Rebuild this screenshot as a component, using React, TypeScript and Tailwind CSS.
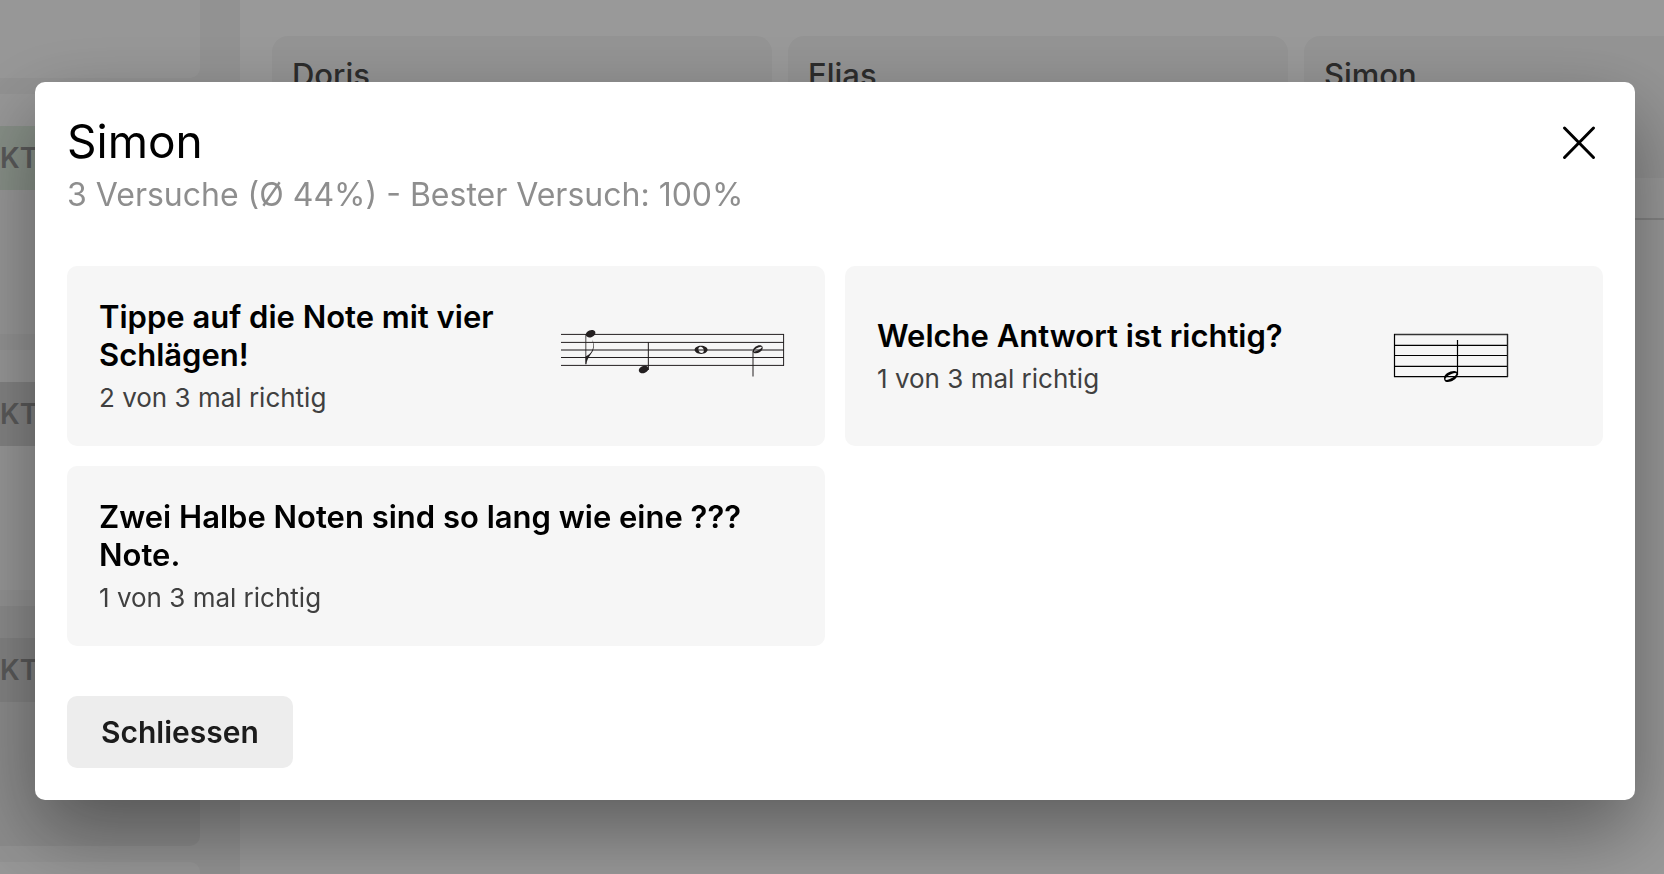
import React from "react";

type Tone = "done" | "idle";

const lessons: { tone: Tone; active: boolean }[] = [
  { tone: "done", active: false },
  { tone: "idle", active: false },
  { tone: "idle", active: true },
];

const students = ["Doris", "Elias", "Simon"];

function StaffFourNotes() {
  return (
    <svg viewBox="0 0 240 60" className="h-[60px] w-[240px] shrink-0" role="img" aria-label="Notenzeile mit vier Noten">
      <g stroke="#231f20" strokeWidth="1">
        <path d="M8 8.4H231M8 16.4H231M8 31.5H231M8 39.4H231" />
        <path d="M8 24H231" strokeWidth="1.4" opacity="0.7" />
        <path d="M230.6 8V39.8" />
        <path d="M32.8 8V38" strokeWidth="1.1" opacity="0.75" />
        <path d="M95.4 16V44" strokeWidth="1.2" opacity="0.85" />
        <path d="M200 25V50.5" strokeWidth="1.4" opacity="0.7" />
      </g>
      <g fill="#231f20">
        <ellipse cx="37.6" cy="7.7" rx="5" ry="3.5" transform="rotate(-22 37.6 7.7)" />
        <ellipse cx="90.6" cy="43.5" rx="5" ry="3.6" transform="rotate(-22 90.6 43.5)" />
        <path d="M32.6 38.5V30.5C36 29 40.2 25.5 40.2 19.5C40.2 17 39.8 15 39 13.2C40.9 16 41.4 20.5 40.2 24C38.9 28 34.6 30.5 33.2 38.5Z" />
        <path fillRule="evenodd" d="M148.1 19.7C151.7 19.7 154.6 21.5 154.6 23.8S151.7 27.9 148.1 27.9S141.6 26.1 141.6 23.8S144.5 19.7 148.1 19.7ZM147.3 20.7C145.5 21 145 22.6 145.6 24.4C146.2 26.2 147.6 27.1 149 26.9C150.7 26.6 151.2 25 150.6 23.2C150 21.4 148.7 20.5 147.3 20.7Z" />
        <path fillRule="evenodd" d="M199.8 24.9C200.5 21 205.5 18.3 208.5 19.7C210.7 20.8 209.8 24.2 206.9 26C203.9 27.9 199.5 27.5 199.8 24.9ZM201 25.3C202 26.3 208.5 23 208.8 21.3C208.4 19.5 200.8 23.3 201 25.3Z" />
      </g>
    </svg>
  );
}

function StaffHalfNote() {
  return (
    <svg viewBox="0 0 240 60" className="h-[60px] w-[240px] shrink-0" role="img" aria-label="Notenzeile mit einer halben Note">
      <g stroke="#000" strokeWidth="1.2" fill="none">
        <path d="M63 8.5H177" stroke="#333" strokeWidth="1.4" />
        <path d="M63 19.3H177M63 29.5H177M63 40.3H177M63 50.6H177" />
        <path d="M63.5 8V51" />
        <path d="M176.5 8V51" stroke="#222" strokeWidth="1.4" />
        <path d="M126.5 14V49" />
      </g>
      <path
        fill="#000"
        fillRule="evenodd"
        d="M113 52C113.2 48 119 44.8 123.5 45.1C126.4 45.3 127.4 47 126.6 49.6C125.4 53.6 120 56.4 116 56C114 55.8 112.9 54.4 113 52ZM114.4 53.6C115.6 55.4 125 50.8 125.5 47.6C124.4 45 113.6 50.4 114.4 53.6Z"
      />
    </svg>
  );
}

function QuestionCard({ title, result, children }: { title: string; result: string; children?: React.ReactNode }) {
  return (
    <li className="flex min-h-[180px] items-center gap-6 rounded-[10px] bg-[#f6f6f6] px-8 py-8">
      <div className="min-w-0 flex-1">
        <h2 className="text-[31px] leading-[38px] font-semibold text-black">{title}</h2>
        <p className="mt-2 text-[26px] leading-8 font-normal text-[#404040]">{result}</p>
      </div>
      {children}
    </li>
  );
}

function Background() {
  return (
    <div className="flex h-screen overflow-hidden bg-white" aria-hidden="true">
      <aside className="flex w-60 shrink-0 flex-col gap-4 bg-[#f4f4f4] pr-10">
        <div className="h-[78px] shrink-0 rounded-br-[10px] bg-[#fcfcfc]" />
        {lessons.map((lesson, i) => (
          <div
            key={i}
            className={
              lesson.active
                ? "h-60 shrink-0 rounded-r-[10px] bg-[#e8e8e8] pt-8"
                : "h-60 shrink-0 rounded-r-[10px] bg-[#fcfcfc] pt-8"
            }
          >
            <div
              className={
                lesson.tone === "done"
                  ? "h-16 bg-[#e0eee0] text-[28px] leading-[64px] font-semibold text-[#959595]"
                  : "h-16 bg-[#dadada] text-[28px] leading-[64px] font-semibold text-[#959595]"
              }
            >
              KT
            </div>
          </div>
        ))}
        <div className="h-60 shrink-0 rounded-tr-[10px] bg-[#fcfcfc]" />
      </aside>
      <main className="min-w-0 flex-1 overflow-hidden pt-9 pl-8">
        <div className="flex gap-4">
          {students.map((name) => (
            <div key={name} className="h-[142px] w-[500px] shrink-0 rounded-2xl bg-[#f6f6f6] px-5 pt-5">
              <p className="text-[31px] leading-[38px] font-medium text-[#4a4a4a]">{name}</p>
            </div>
          ))}
        </div>
        <hr className="mt-10 border-t-2 border-[#dcdcdc]" />
      </main>
    </div>
  );
}

export default function App() {
  return (
    <div className="font-[Inter,sans-serif]">
      <Background />
      <div className="fixed inset-0 flex items-start bg-black/40 pt-[82px] pr-[29px] pl-[35px]">
        <section
          role="dialog"
          aria-modal="true"
          aria-labelledby="dialog-title"
          className="w-full rounded-[10px] bg-white p-8 shadow-[0_32px_80px_rgba(0,0,0,0.4)]"
        >
          <header className="flex items-start justify-between">
            <div>
              <h1 id="dialog-title" className="text-[46px] leading-[54px] font-normal text-black">
                Simon
              </h1>
              <p className="mt-2 text-[32px] leading-[38px] font-normal text-[#8e8e8e]">
                3 Versuche (Ø 44%) - Bester Versuch: 100%
              </p>
            </div>
            <button type="button" aria-label="Dialog beenden" className="mt-1 text-black">
              <svg viewBox="0 0 48 48" className="size-12" fill="none" stroke="currentColor" strokeWidth="3" strokeLinecap="round">
                <path d="M9.5 10L38.5 39.5M38.5 10L9.5 39.5" />
              </svg>
            </button>
          </header>
          <ul className="mt-[52px] grid grid-cols-2 gap-5">
            <QuestionCard title="Tippe auf die Note mit vier Schlägen!" result="2 von 3 mal richtig">
              <StaffFourNotes />
            </QuestionCard>
            <QuestionCard title="Welche Antwort ist richtig?" result="1 von 3 mal richtig">
              <StaffHalfNote />
            </QuestionCard>
            <QuestionCard title="Zwei Halbe Noten sind so lang wie eine ??? Note." result="1 von 3 mal richtig" />
          </ul>
          <button
            type="button"
            className="mt-[50px] block h-[72px] rounded-[10px] bg-[#ededed] px-[34px] text-[30px] leading-[38px] font-semibold text-[#1c1c1c]"
          >
            Schliessen
          </button>
        </section>
      </div>
    </div>
  );
}
